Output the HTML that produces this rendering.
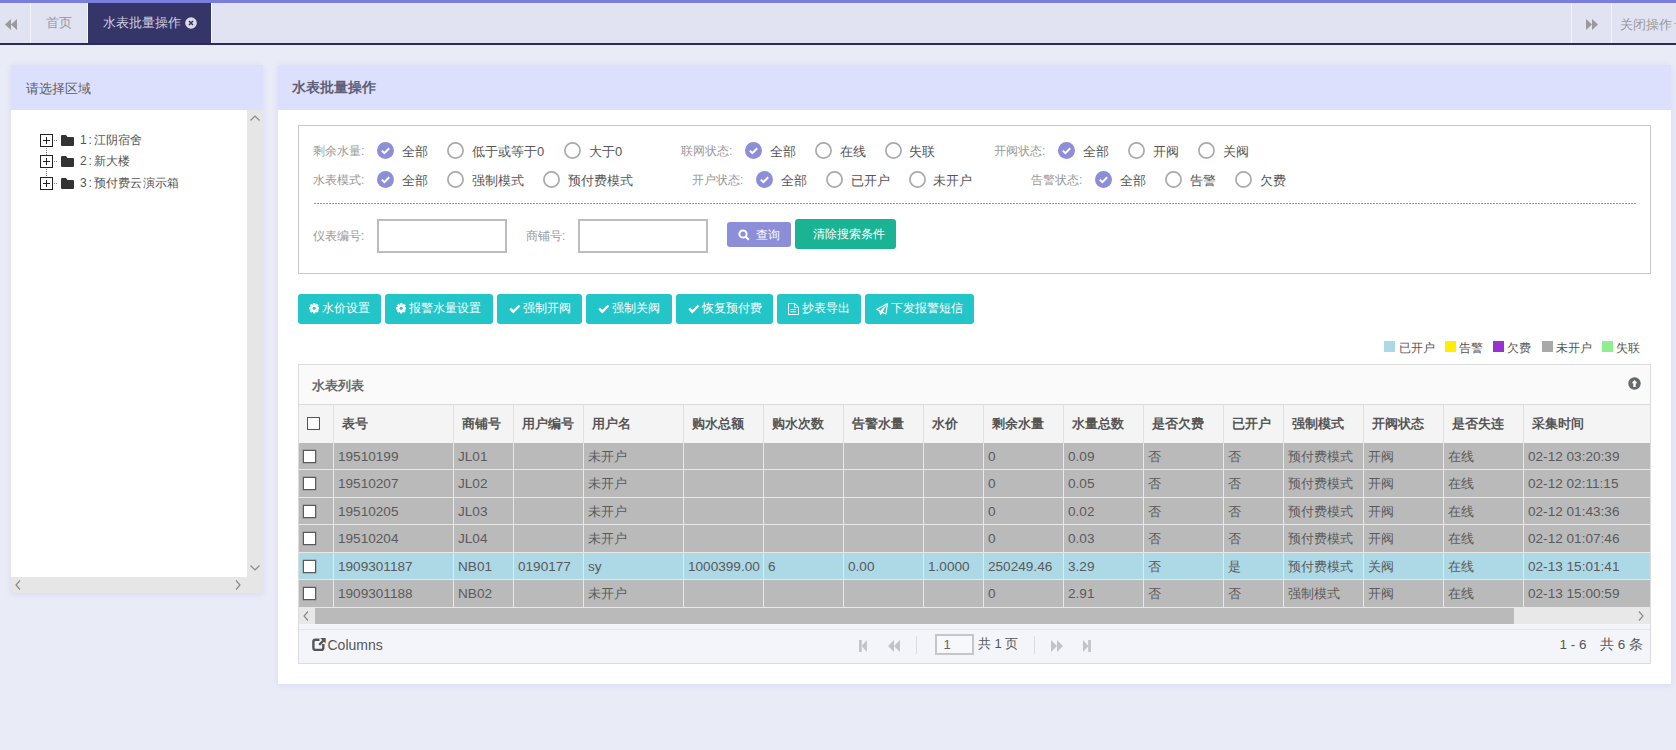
<!DOCTYPE html>
<html><head><meta charset="utf-8">
<style>
*{box-sizing:border-box;margin:0;padding:0}
html,body{width:1676px;height:750px;overflow:hidden;background:#e9ebf7;font-family:"Liberation Sans",sans-serif;color:#676a6c;position:relative}
.a{position:absolute;white-space:nowrap}
svg.a{display:block}
</style></head><body>
<div class="a" style="left:0px;top:0px;width:1676px;height:3px;background:#7a7edb;"></div>
<div class="a" style="left:0px;top:3px;width:1676px;height:40px;background:#e1e3f3;"></div>
<div class="a" style="left:0px;top:43px;width:1676px;height:2px;background:#2a2a5c;"></div>
<div class="a" style="left:30px;top:3px;width:1px;height:40px;background:#f4f4f4;"></div>
<div class="a" style="left:87px;top:3px;width:1px;height:40px;background:#fafafa;"></div>
<div class="a" style="left:88px;top:3px;width:123px;height:40px;background:#35356a;"></div>
<div class="a" style="left:211px;top:3px;width:1px;height:40px;background:#fafafa;"></div>
<div class="a" style="left:1571px;top:3px;width:1px;height:40px;background:#f4f4f6;"></div>
<div class="a" style="left:1611px;top:3px;width:1px;height:40px;background:#f4f4f6;"></div>
<svg class="a" style="left:5px;top:18px" width="13" height="13" viewBox="0 0 13 13"><path d="M6 1 L0 6.5 L6 12Z M12 1 L6 6.5 L12 12Z" fill="#9a9a9a"/></svg>
<div class="a" style="left:46px;top:13.0px;height:20px;line-height:20px;font-size:13px;color:#999;font-weight:normal;">首页</div>
<div class="a" style="left:103px;top:13.0px;height:20px;line-height:20px;font-size:13px;color:#cfd0e0;font-weight:normal;">水表批量操作</div>
<svg class="a" style="left:184.6px;top:17.3px" width="12" height="12" viewBox="0 0 12 12"><circle cx="6" cy="6" r="5.8" fill="#dcdce4"/><path d="M4 4 L8 8 M8 4 L4 8" stroke="#35356a" stroke-width="1.6"/></svg>
<svg class="a" style="left:1585px;top:18px" width="13" height="13" viewBox="0 0 13 13"><path d="M1 1 L7 6.5 L1 12Z M7 1 L13 6.5 L7 12Z" fill="#9a9a9a"/></svg>
<div class="a" style="left:1620px;top:14.5px;height:20px;line-height:20px;font-size:13px;color:#999;font-weight:normal;">关闭操作</div>
<div class="a" style="left:1674px;top:23px;width:2px;height:1px;background:#bbb;"></div>
<div class="a" style="left:11px;top:65px;width:252px;height:528px;background:#fff;box-shadow:0 1px 6px rgba(110,110,225,.13)"></div>
<div class="a" style="left:11px;top:65px;width:252px;height:45px;background:#dde0fc;"></div>
<div class="a" style="left:26px;top:78.7px;height:20px;line-height:20px;font-size:13px;color:#5a5c60;font-weight:normal;">请选择区域</div>
<div class="a" style="left:247px;top:110px;width:16px;height:483px;background:#e6e6e6;"></div>
<div class="a" style="left:11px;top:577px;width:252px;height:16px;background:#e6e6e6;"></div>
<svg class="a" style="left:249px;top:114px" width="12" height="8" viewBox="0 0 12 8"><path d="M1.5 6.5 L6 2 L10.5 6.5" stroke="#8a8a8a" stroke-width="1.2" fill="none"/></svg>
<svg class="a" style="left:249px;top:564px" width="12" height="8" viewBox="0 0 12 8"><path d="M1.5 1.5 L6 6 L10.5 1.5" stroke="#8a8a8a" stroke-width="1.2" fill="none"/></svg>
<svg class="a" style="left:14px;top:579px" width="8" height="12" viewBox="0 0 8 12"><path d="M6 1.5 L2 6 L6 10.5" stroke="#8a8a8a" stroke-width="1.2" fill="none"/></svg>
<svg class="a" style="left:234px;top:579px" width="8" height="12" viewBox="0 0 8 12"><path d="M2 1.5 L6 6 L2 10.5" stroke="#8a8a8a" stroke-width="1.2" fill="none"/></svg>
<svg class="a" style="left:40px;top:134px" width="20" height="13" viewBox="0 0 20 13"><rect x="0.5" y="0.5" width="12" height="12" fill="#fff" stroke="#222"/><path d="M3 6.5 H10 M6.5 3 V10" stroke="#222" stroke-width="1"/><path d="M14 6.5 H15 M16 6.5 H17" stroke="#777"/></svg>
<svg class="a" style="left:61px;top:135px" width="13" height="11" viewBox="0 0 13 11"><path d="M1 0 H5 L6.5 2 H12 Q13 2 13 3 V10 Q13 11 12 11 H1 Q0 11 0 10 V1 Q0 0 1 0Z" fill="#333"/></svg>
<div class="a" style="left:80px;top:130.2px;height:20px;line-height:20px;font-size:12px;color:#555;font-weight:normal;letter-spacing:0.25px">1<span style="padding:0 1.5px">:</span>江阴宿舍</div>
<svg class="a" style="left:46px;top:147px" width="1" height="9" viewBox="0 0 1 9"><path d="M0.5 1 V2 M0.5 3 V4 M0.5 5 V6 M0.5 7 V8" stroke="#777"/></svg>
<svg class="a" style="left:40px;top:155px" width="20" height="13" viewBox="0 0 20 13"><rect x="0.5" y="0.5" width="12" height="12" fill="#fff" stroke="#222"/><path d="M3 6.5 H10 M6.5 3 V10" stroke="#222" stroke-width="1"/><path d="M14 6.5 H15 M16 6.5 H17" stroke="#777"/></svg>
<svg class="a" style="left:61px;top:156px" width="13" height="11" viewBox="0 0 13 11"><path d="M1 0 H5 L6.5 2 H12 Q13 2 13 3 V10 Q13 11 12 11 H1 Q0 11 0 10 V1 Q0 0 1 0Z" fill="#333"/></svg>
<div class="a" style="left:80px;top:151.2px;height:20px;line-height:20px;font-size:12px;color:#555;font-weight:normal;letter-spacing:0.25px">2<span style="padding:0 1.5px">:</span>新大楼</div>
<svg class="a" style="left:46px;top:168px" width="1" height="9" viewBox="0 0 1 9"><path d="M0.5 1 V2 M0.5 3 V4 M0.5 5 V6 M0.5 7 V8" stroke="#777"/></svg>
<svg class="a" style="left:40px;top:177px" width="20" height="13" viewBox="0 0 20 13"><rect x="0.5" y="0.5" width="12" height="12" fill="#fff" stroke="#222"/><path d="M3 6.5 H10 M6.5 3 V10" stroke="#222" stroke-width="1"/><path d="M14 6.5 H15 M16 6.5 H17" stroke="#777"/></svg>
<svg class="a" style="left:61px;top:178px" width="13" height="11" viewBox="0 0 13 11"><path d="M1 0 H5 L6.5 2 H12 Q13 2 13 3 V10 Q13 11 12 11 H1 Q0 11 0 10 V1 Q0 0 1 0Z" fill="#333"/></svg>
<div class="a" style="left:80px;top:173.2px;height:20px;line-height:20px;font-size:12px;color:#555;font-weight:normal;letter-spacing:0.25px">3<span style="padding:0 1.5px">:</span>预付费云演示箱</div>
<div class="a" style="left:278px;top:65px;width:1393px;height:619px;background:#fff;box-shadow:0 1px 6px rgba(110,110,225,.13)"></div>
<div class="a" style="left:278px;top:65px;width:1393px;height:45px;background:#dde0fc;"></div>
<div class="a" style="left:292px;top:77.0px;height:20px;line-height:20px;font-size:14px;color:#5e6078;font-weight:bold;">水表批量操作</div>
<div class="a" style="left:298px;top:125px;width:1353px;height:149px;background:#fff;border:1px solid #c8c8c8"></div>
<svg class="a" style="left:314px;top:202px" width="1322" height="2"><line x1="0" y1="1.5" x2="1322" y2="1.5" stroke="#999" stroke-width="1" stroke-dasharray="2 1"/></svg>
<div class="a" style="left:313px;top:140.5px;height:20px;line-height:20px;font-size:12px;color:#999;font-weight:normal;">剩余水量:</div>
<svg class="a" style="left:377px;top:142.0px" width="17" height="17" viewBox="0 0 17 17"><circle cx="8.5" cy="8.5" r="8.5" fill="#8c8ed8"/><path d="M4.8 8.6 L7.4 11.1 L12.2 6.2" stroke="#fff" stroke-width="2" fill="none"/></svg>
<div class="a" style="left:402px;top:142.0px;height:20px;line-height:20px;font-size:13px;color:#555;font-weight:normal;">全部</div>
<svg class="a" style="left:447px;top:142.0px" width="17" height="17" viewBox="0 0 17 17"><circle cx="8.5" cy="8.5" r="7.6" fill="#fff" stroke="#aaa" stroke-width="1.7"/></svg>
<div class="a" style="left:472px;top:142.0px;height:20px;line-height:20px;font-size:13px;color:#555;font-weight:normal;">低于或等于0</div>
<svg class="a" style="left:564px;top:142.0px" width="17" height="17" viewBox="0 0 17 17"><circle cx="8.5" cy="8.5" r="7.6" fill="#fff" stroke="#aaa" stroke-width="1.7"/></svg>
<div class="a" style="left:589px;top:142.0px;height:20px;line-height:20px;font-size:13px;color:#555;font-weight:normal;">大于0</div>
<div class="a" style="left:681px;top:140.5px;height:20px;line-height:20px;font-size:12px;color:#999;font-weight:normal;">联网状态:</div>
<svg class="a" style="left:745px;top:142.0px" width="17" height="17" viewBox="0 0 17 17"><circle cx="8.5" cy="8.5" r="8.5" fill="#8c8ed8"/><path d="M4.8 8.6 L7.4 11.1 L12.2 6.2" stroke="#fff" stroke-width="2" fill="none"/></svg>
<div class="a" style="left:770px;top:142.0px;height:20px;line-height:20px;font-size:13px;color:#555;font-weight:normal;">全部</div>
<svg class="a" style="left:815px;top:142.0px" width="17" height="17" viewBox="0 0 17 17"><circle cx="8.5" cy="8.5" r="7.6" fill="#fff" stroke="#aaa" stroke-width="1.7"/></svg>
<div class="a" style="left:840px;top:142.0px;height:20px;line-height:20px;font-size:13px;color:#555;font-weight:normal;">在线</div>
<svg class="a" style="left:885px;top:142.0px" width="17" height="17" viewBox="0 0 17 17"><circle cx="8.5" cy="8.5" r="7.6" fill="#fff" stroke="#aaa" stroke-width="1.7"/></svg>
<div class="a" style="left:909px;top:142.0px;height:20px;line-height:20px;font-size:13px;color:#555;font-weight:normal;">失联</div>
<div class="a" style="left:994px;top:140.5px;height:20px;line-height:20px;font-size:12px;color:#999;font-weight:normal;">开阀状态:</div>
<svg class="a" style="left:1058px;top:142.0px" width="17" height="17" viewBox="0 0 17 17"><circle cx="8.5" cy="8.5" r="8.5" fill="#8c8ed8"/><path d="M4.8 8.6 L7.4 11.1 L12.2 6.2" stroke="#fff" stroke-width="2" fill="none"/></svg>
<div class="a" style="left:1083px;top:142.0px;height:20px;line-height:20px;font-size:13px;color:#555;font-weight:normal;">全部</div>
<svg class="a" style="left:1128px;top:142.0px" width="17" height="17" viewBox="0 0 17 17"><circle cx="8.5" cy="8.5" r="7.6" fill="#fff" stroke="#aaa" stroke-width="1.7"/></svg>
<div class="a" style="left:1153px;top:142.0px;height:20px;line-height:20px;font-size:13px;color:#555;font-weight:normal;">开阀</div>
<svg class="a" style="left:1198px;top:142.0px" width="17" height="17" viewBox="0 0 17 17"><circle cx="8.5" cy="8.5" r="7.6" fill="#fff" stroke="#aaa" stroke-width="1.7"/></svg>
<div class="a" style="left:1223px;top:142.0px;height:20px;line-height:20px;font-size:13px;color:#555;font-weight:normal;">关阀</div>
<div class="a" style="left:313px;top:169.5px;height:20px;line-height:20px;font-size:12px;color:#999;font-weight:normal;">水表模式:</div>
<svg class="a" style="left:377px;top:171.0px" width="17" height="17" viewBox="0 0 17 17"><circle cx="8.5" cy="8.5" r="8.5" fill="#8c8ed8"/><path d="M4.8 8.6 L7.4 11.1 L12.2 6.2" stroke="#fff" stroke-width="2" fill="none"/></svg>
<div class="a" style="left:402px;top:171.0px;height:20px;line-height:20px;font-size:13px;color:#555;font-weight:normal;">全部</div>
<svg class="a" style="left:447px;top:171.0px" width="17" height="17" viewBox="0 0 17 17"><circle cx="8.5" cy="8.5" r="7.6" fill="#fff" stroke="#aaa" stroke-width="1.7"/></svg>
<div class="a" style="left:472px;top:171.0px;height:20px;line-height:20px;font-size:13px;color:#555;font-weight:normal;">强制模式</div>
<svg class="a" style="left:543px;top:171.0px" width="17" height="17" viewBox="0 0 17 17"><circle cx="8.5" cy="8.5" r="7.6" fill="#fff" stroke="#aaa" stroke-width="1.7"/></svg>
<div class="a" style="left:568px;top:171.0px;height:20px;line-height:20px;font-size:13px;color:#555;font-weight:normal;">预付费模式</div>
<div class="a" style="left:692px;top:169.5px;height:20px;line-height:20px;font-size:12px;color:#999;font-weight:normal;">开户状态:</div>
<svg class="a" style="left:756px;top:171.0px" width="17" height="17" viewBox="0 0 17 17"><circle cx="8.5" cy="8.5" r="8.5" fill="#8c8ed8"/><path d="M4.8 8.6 L7.4 11.1 L12.2 6.2" stroke="#fff" stroke-width="2" fill="none"/></svg>
<div class="a" style="left:781px;top:171.0px;height:20px;line-height:20px;font-size:13px;color:#555;font-weight:normal;">全部</div>
<svg class="a" style="left:826px;top:171.0px" width="17" height="17" viewBox="0 0 17 17"><circle cx="8.5" cy="8.5" r="7.6" fill="#fff" stroke="#aaa" stroke-width="1.7"/></svg>
<div class="a" style="left:851px;top:171.0px;height:20px;line-height:20px;font-size:13px;color:#555;font-weight:normal;">已开户</div>
<svg class="a" style="left:909px;top:171.0px" width="17" height="17" viewBox="0 0 17 17"><circle cx="8.5" cy="8.5" r="7.6" fill="#fff" stroke="#aaa" stroke-width="1.7"/></svg>
<div class="a" style="left:933px;top:171.0px;height:20px;line-height:20px;font-size:13px;color:#555;font-weight:normal;">未开户</div>
<div class="a" style="left:1031px;top:169.5px;height:20px;line-height:20px;font-size:12px;color:#999;font-weight:normal;">告警状态:</div>
<svg class="a" style="left:1095px;top:171.0px" width="17" height="17" viewBox="0 0 17 17"><circle cx="8.5" cy="8.5" r="8.5" fill="#8c8ed8"/><path d="M4.8 8.6 L7.4 11.1 L12.2 6.2" stroke="#fff" stroke-width="2" fill="none"/></svg>
<div class="a" style="left:1120px;top:171.0px;height:20px;line-height:20px;font-size:13px;color:#555;font-weight:normal;">全部</div>
<svg class="a" style="left:1165px;top:171.0px" width="17" height="17" viewBox="0 0 17 17"><circle cx="8.5" cy="8.5" r="7.6" fill="#fff" stroke="#aaa" stroke-width="1.7"/></svg>
<div class="a" style="left:1190px;top:171.0px;height:20px;line-height:20px;font-size:13px;color:#555;font-weight:normal;">告警</div>
<svg class="a" style="left:1235px;top:171.0px" width="17" height="17" viewBox="0 0 17 17"><circle cx="8.5" cy="8.5" r="7.6" fill="#fff" stroke="#aaa" stroke-width="1.7"/></svg>
<div class="a" style="left:1260px;top:171.0px;height:20px;line-height:20px;font-size:13px;color:#555;font-weight:normal;">欠费</div>
<div class="a" style="left:313px;top:226.0px;height:20px;line-height:20px;font-size:12px;color:#999;font-weight:normal;">仪表编号:</div>
<div class="a" style="left:377px;top:219px;width:130px;height:34px;background:#fff;border:2px solid #bdbdbd"></div>
<div class="a" style="left:526px;top:226.0px;height:20px;line-height:20px;font-size:12px;color:#999;font-weight:normal;">商铺号:</div>
<div class="a" style="left:578px;top:219px;width:130px;height:34px;background:#fff;border:2px solid #bdbdbd"></div>
<div class="a" style="left:727px;top:222px;width:64px;height:25px;background:#8c8ed8;border-radius:3px"></div>
<svg class="a" style="left:738px;top:229px" width="12" height="12" viewBox="0 0 12 12"><circle cx="5" cy="5" r="3.6" stroke="#fff" stroke-width="2" fill="none"/><path d="M7.6 7.6 L10.8 10.8" stroke="#fff" stroke-width="2.2"/></svg>
<div class="a" style="left:756px;top:225.0px;height:20px;line-height:20px;font-size:12px;color:#fff;font-weight:normal;">查询</div>
<div class="a" style="left:795px;top:219px;width:101px;height:30px;background:#1ab394;border-radius:3px"></div>
<div class="a" style="left:813px;top:224.0px;height:20px;line-height:20px;font-size:12px;color:#fff;font-weight:normal;">清除搜索条件</div>
<div class="a" style="left:298px;top:294px;width:83px;height:30px;background:#23c6c8;border-radius:3px"></div>
<svg class="a" style="left:308.5px;top:303.4px" width="10.4" height="10.4" viewBox="0 0 10.4 10.4"><circle cx="5.2" cy="5.2" r="3.7" fill="#fff"/><rect x="3.95" y="0.0" width="2.5" height="3" fill="#fff" transform="rotate(0 5.2 5.2)"/><rect x="3.95" y="0.0" width="2.5" height="3" fill="#fff" transform="rotate(45 5.2 5.2)"/><rect x="3.95" y="0.0" width="2.5" height="3" fill="#fff" transform="rotate(90 5.2 5.2)"/><rect x="3.95" y="0.0" width="2.5" height="3" fill="#fff" transform="rotate(135 5.2 5.2)"/><rect x="3.95" y="0.0" width="2.5" height="3" fill="#fff" transform="rotate(180 5.2 5.2)"/><rect x="3.95" y="0.0" width="2.5" height="3" fill="#fff" transform="rotate(225 5.2 5.2)"/><rect x="3.95" y="0.0" width="2.5" height="3" fill="#fff" transform="rotate(270 5.2 5.2)"/><rect x="3.95" y="0.0" width="2.5" height="3" fill="#fff" transform="rotate(315 5.2 5.2)"/><circle cx="5.2" cy="5.2" r="1.55" fill="#23c6c8"/></svg>
<div class="a" style="left:322px;top:298.2px;height:20px;line-height:20px;font-size:12px;color:#fff;font-weight:normal;">水价设置</div>
<div class="a" style="left:385px;top:294px;width:108px;height:30px;background:#23c6c8;border-radius:3px"></div>
<svg class="a" style="left:395.5px;top:303.4px" width="10.4" height="10.4" viewBox="0 0 10.4 10.4"><circle cx="5.2" cy="5.2" r="3.7" fill="#fff"/><rect x="3.95" y="0.0" width="2.5" height="3" fill="#fff" transform="rotate(0 5.2 5.2)"/><rect x="3.95" y="0.0" width="2.5" height="3" fill="#fff" transform="rotate(45 5.2 5.2)"/><rect x="3.95" y="0.0" width="2.5" height="3" fill="#fff" transform="rotate(90 5.2 5.2)"/><rect x="3.95" y="0.0" width="2.5" height="3" fill="#fff" transform="rotate(135 5.2 5.2)"/><rect x="3.95" y="0.0" width="2.5" height="3" fill="#fff" transform="rotate(180 5.2 5.2)"/><rect x="3.95" y="0.0" width="2.5" height="3" fill="#fff" transform="rotate(225 5.2 5.2)"/><rect x="3.95" y="0.0" width="2.5" height="3" fill="#fff" transform="rotate(270 5.2 5.2)"/><rect x="3.95" y="0.0" width="2.5" height="3" fill="#fff" transform="rotate(315 5.2 5.2)"/><circle cx="5.2" cy="5.2" r="1.55" fill="#23c6c8"/></svg>
<div class="a" style="left:409px;top:298.2px;height:20px;line-height:20px;font-size:12px;color:#fff;font-weight:normal;">报警水量设置</div>
<div class="a" style="left:497px;top:294px;width:85px;height:30px;background:#23c6c8;border-radius:3px"></div>
<svg class="a" style="left:508.5px;top:304px" width="12" height="10" viewBox="0 0 12 10"><path d="M1.2 4.6 L4.3 7.7 L10.5 1.5" stroke="#fff" stroke-width="2.4" fill="none"/></svg>
<div class="a" style="left:523.2px;top:298.2px;height:20px;line-height:20px;font-size:12px;color:#fff;font-weight:normal;">强制开阀</div>
<div class="a" style="left:586px;top:294px;width:86px;height:30px;background:#23c6c8;border-radius:3px"></div>
<svg class="a" style="left:597.5px;top:304px" width="12" height="10" viewBox="0 0 12 10"><path d="M1.2 4.6 L4.3 7.7 L10.5 1.5" stroke="#fff" stroke-width="2.4" fill="none"/></svg>
<div class="a" style="left:612.2px;top:298.2px;height:20px;line-height:20px;font-size:12px;color:#fff;font-weight:normal;">强制关阀</div>
<div class="a" style="left:676px;top:294px;width:97px;height:30px;background:#23c6c8;border-radius:3px"></div>
<svg class="a" style="left:687.5px;top:304px" width="12" height="10" viewBox="0 0 12 10"><path d="M1.2 4.6 L4.3 7.7 L10.5 1.5" stroke="#fff" stroke-width="2.4" fill="none"/></svg>
<div class="a" style="left:702.2px;top:298.2px;height:20px;line-height:20px;font-size:12px;color:#fff;font-weight:normal;">恢复预付费</div>
<div class="a" style="left:777px;top:294px;width:84px;height:30px;background:#23c6c8;border-radius:3px"></div>
<svg class="a" style="left:788px;top:303px" width="11" height="12" viewBox="0 0 11 12"><path d="M0.5 0.5 H6.8 L10.5 4.2 V11.5 H0.5Z" stroke="#fff" stroke-width="1" fill="none"/><path d="M6.5 0.5 V4.5 H10.5" stroke="#fff" stroke-width="0.8" fill="none"/><path d="M2.5 6.5 H8 M2.5 8.7 H8" stroke="#fff" stroke-width="1.1"/></svg>
<div class="a" style="left:801.6px;top:298.2px;height:20px;line-height:20px;font-size:12px;color:#fff;font-weight:normal;">抄表导出</div>
<div class="a" style="left:865px;top:294px;width:109px;height:30px;background:#23c6c8;border-radius:3px"></div>
<svg class="a" style="left:876px;top:303px" width="12" height="12" viewBox="0 0 12 12"><path d="M11.5 0.6 L0.7 6.5 L3.6 7.7 L4.6 11.5 L6.4 9.2 L9.9 11 Z" stroke="#fff" stroke-width="1.1" fill="none" stroke-linejoin="round"/><path d="M11.5 0.6 L4 8 L4.6 11.5 L6.4 9.2Z" fill="#fff"/></svg>
<div class="a" style="left:891.4px;top:298.2px;height:20px;line-height:20px;font-size:12px;color:#fff;font-weight:normal;">下发报警短信</div>
<div class="a" style="left:1384px;top:341px;width:11px;height:11px;background:#add8e6;"></div>
<div class="a" style="left:1399px;top:337.8px;height:20px;line-height:20px;font-size:12px;color:#555;font-weight:normal;">已开户</div>
<div class="a" style="left:1445px;top:341px;width:11px;height:11px;background:#ffee00;"></div>
<div class="a" style="left:1459px;top:337.8px;height:20px;line-height:20px;font-size:12px;color:#555;font-weight:normal;">告警</div>
<div class="a" style="left:1493px;top:341px;width:11px;height:11px;background:#9932cc;"></div>
<div class="a" style="left:1507px;top:337.8px;height:20px;line-height:20px;font-size:12px;color:#555;font-weight:normal;">欠费</div>
<div class="a" style="left:1542px;top:341px;width:11px;height:11px;background:#a9a9a9;"></div>
<div class="a" style="left:1556px;top:337.8px;height:20px;line-height:20px;font-size:12px;color:#555;font-weight:normal;">未开户</div>
<div class="a" style="left:1602px;top:341px;width:11px;height:11px;background:#90ee90;"></div>
<div class="a" style="left:1616px;top:337.8px;height:20px;line-height:20px;font-size:12px;color:#555;font-weight:normal;">失联</div>
<div class="a" style="left:298px;top:364px;width:1353px;height:300px;background:#fafafa;border:1px solid #dcdcdc"></div>
<div class="a" style="left:312px;top:376.0px;height:20px;line-height:20px;font-size:13px;color:#676a6c;font-weight:bold;">水表列表</div>
<svg class="a" style="left:1627.5px;top:377px" width="13" height="13" viewBox="0 0 13 13"><circle cx="6.5" cy="6.5" r="6.2" fill="#676a6c"/><path d="M6.5 3 L3.6 6.2 H5.3 V10 H7.7 V6.2 H9.4Z" fill="#fff"/></svg>
<div class="a" style="left:299px;top:404px;width:1351px;height:39px;background:#f4f4f4;border-top:1px solid #dcdcdc"></div>
<div class="a" style="left:333px;top:405px;width:1px;height:38px;background:#e0e0e0;"></div>
<div class="a" style="left:453px;top:405px;width:1px;height:38px;background:#e0e0e0;"></div>
<div class="a" style="left:513px;top:405px;width:1px;height:38px;background:#e0e0e0;"></div>
<div class="a" style="left:583px;top:405px;width:1px;height:38px;background:#e0e0e0;"></div>
<div class="a" style="left:683px;top:405px;width:1px;height:38px;background:#e0e0e0;"></div>
<div class="a" style="left:763px;top:405px;width:1px;height:38px;background:#e0e0e0;"></div>
<div class="a" style="left:843px;top:405px;width:1px;height:38px;background:#e0e0e0;"></div>
<div class="a" style="left:923px;top:405px;width:1px;height:38px;background:#e0e0e0;"></div>
<div class="a" style="left:983px;top:405px;width:1px;height:38px;background:#e0e0e0;"></div>
<div class="a" style="left:1063px;top:405px;width:1px;height:38px;background:#e0e0e0;"></div>
<div class="a" style="left:1143px;top:405px;width:1px;height:38px;background:#e0e0e0;"></div>
<div class="a" style="left:1223px;top:405px;width:1px;height:38px;background:#e0e0e0;"></div>
<div class="a" style="left:1283px;top:405px;width:1px;height:38px;background:#e0e0e0;"></div>
<div class="a" style="left:1363px;top:405px;width:1px;height:38px;background:#e0e0e0;"></div>
<div class="a" style="left:1443px;top:405px;width:1px;height:38px;background:#e0e0e0;"></div>
<div class="a" style="left:1523px;top:405px;width:1px;height:38px;background:#e0e0e0;"></div>
<div class="a" style="left:307px;top:417px;width:13px;height:13px;border:1px solid #555;background:#fff"></div>
<div class="a" style="left:342px;top:414.0px;height:20px;line-height:20px;font-size:13px;color:#555;font-weight:bold;">表号</div>
<div class="a" style="left:462px;top:414.0px;height:20px;line-height:20px;font-size:13px;color:#555;font-weight:bold;">商铺号</div>
<div class="a" style="left:522px;top:414.0px;height:20px;line-height:20px;font-size:13px;color:#555;font-weight:bold;">用户编号</div>
<div class="a" style="left:592px;top:414.0px;height:20px;line-height:20px;font-size:13px;color:#555;font-weight:bold;">用户名</div>
<div class="a" style="left:692px;top:414.0px;height:20px;line-height:20px;font-size:13px;color:#555;font-weight:bold;">购水总额</div>
<div class="a" style="left:772px;top:414.0px;height:20px;line-height:20px;font-size:13px;color:#555;font-weight:bold;">购水次数</div>
<div class="a" style="left:852px;top:414.0px;height:20px;line-height:20px;font-size:13px;color:#555;font-weight:bold;">告警水量</div>
<div class="a" style="left:932px;top:414.0px;height:20px;line-height:20px;font-size:13px;color:#555;font-weight:bold;">水价</div>
<div class="a" style="left:992px;top:414.0px;height:20px;line-height:20px;font-size:13px;color:#555;font-weight:bold;">剩余水量</div>
<div class="a" style="left:1072px;top:414.0px;height:20px;line-height:20px;font-size:13px;color:#555;font-weight:bold;">水量总数</div>
<div class="a" style="left:1152px;top:414.0px;height:20px;line-height:20px;font-size:13px;color:#555;font-weight:bold;">是否欠费</div>
<div class="a" style="left:1232px;top:414.0px;height:20px;line-height:20px;font-size:13px;color:#555;font-weight:bold;">已开户</div>
<div class="a" style="left:1292px;top:414.0px;height:20px;line-height:20px;font-size:13px;color:#555;font-weight:bold;">强制模式</div>
<div class="a" style="left:1372px;top:414.0px;height:20px;line-height:20px;font-size:13px;color:#555;font-weight:bold;">开阀状态</div>
<div class="a" style="left:1452px;top:414.0px;height:20px;line-height:20px;font-size:13px;color:#555;font-weight:bold;">是否失连</div>
<div class="a" style="left:1532px;top:414.0px;height:20px;line-height:20px;font-size:13px;color:#555;font-weight:bold;">采集时间</div>
<div class="a" style="left:299px;top:443px;width:1351px;height:26px;background:#bababa;"></div>
<div class="a" style="left:299px;top:469px;width:1351px;height:1px;background:#e8e8e8;"></div>
<div class="a" style="left:333px;top:443px;width:1px;height:27px;background:#e8e8e8;"></div>
<div class="a" style="left:453px;top:443px;width:1px;height:27px;background:#e8e8e8;"></div>
<div class="a" style="left:513px;top:443px;width:1px;height:27px;background:#e8e8e8;"></div>
<div class="a" style="left:583px;top:443px;width:1px;height:27px;background:#e8e8e8;"></div>
<div class="a" style="left:683px;top:443px;width:1px;height:27px;background:#e8e8e8;"></div>
<div class="a" style="left:763px;top:443px;width:1px;height:27px;background:#e8e8e8;"></div>
<div class="a" style="left:843px;top:443px;width:1px;height:27px;background:#e8e8e8;"></div>
<div class="a" style="left:923px;top:443px;width:1px;height:27px;background:#e8e8e8;"></div>
<div class="a" style="left:983px;top:443px;width:1px;height:27px;background:#e8e8e8;"></div>
<div class="a" style="left:1063px;top:443px;width:1px;height:27px;background:#e8e8e8;"></div>
<div class="a" style="left:1143px;top:443px;width:1px;height:27px;background:#e8e8e8;"></div>
<div class="a" style="left:1223px;top:443px;width:1px;height:27px;background:#e8e8e8;"></div>
<div class="a" style="left:1283px;top:443px;width:1px;height:27px;background:#e8e8e8;"></div>
<div class="a" style="left:1363px;top:443px;width:1px;height:27px;background:#e8e8e8;"></div>
<div class="a" style="left:1443px;top:443px;width:1px;height:27px;background:#e8e8e8;"></div>
<div class="a" style="left:1523px;top:443px;width:1px;height:27px;background:#e8e8e8;"></div>
<div class="a" style="left:303px;top:449.5px;width:13px;height:13px;border:1px solid #5a5a5a;box-shadow:0 0 0 0.4px rgba(90,90,90,.6);background:#fff"></div>
<div class="a" style="left:338px;top:446.9px;height:20px;line-height:20px;font-size:13.6px;color:#5a5a5a;font-weight:normal;">19510199</div>
<div class="a" style="left:458px;top:446.9px;height:20px;line-height:20px;font-size:13.6px;color:#5a5a5a;font-weight:normal;">JL01</div>
<div class="a" style="left:588px;top:446.5px;height:20px;line-height:20px;font-size:13px;color:#5a5a5a;font-weight:normal;">未开户</div>
<div class="a" style="left:988px;top:446.9px;height:20px;line-height:20px;font-size:13.6px;color:#5a5a5a;font-weight:normal;">0</div>
<div class="a" style="left:1068px;top:446.9px;height:20px;line-height:20px;font-size:13.6px;color:#5a5a5a;font-weight:normal;">0.09</div>
<div class="a" style="left:1148px;top:446.5px;height:20px;line-height:20px;font-size:13px;color:#5a5a5a;font-weight:normal;">否</div>
<div class="a" style="left:1228px;top:446.5px;height:20px;line-height:20px;font-size:13px;color:#5a5a5a;font-weight:normal;">否</div>
<div class="a" style="left:1288px;top:446.5px;height:20px;line-height:20px;font-size:13px;color:#5a5a5a;font-weight:normal;">预付费模式</div>
<div class="a" style="left:1368px;top:446.5px;height:20px;line-height:20px;font-size:13px;color:#5a5a5a;font-weight:normal;">开阀</div>
<div class="a" style="left:1448px;top:446.5px;height:20px;line-height:20px;font-size:13px;color:#5a5a5a;font-weight:normal;">在线</div>
<div class="a" style="left:1528px;top:446.9px;height:20px;line-height:20px;font-size:13.6px;color:#5a5a5a;font-weight:normal;">02-12 03:20:39</div>
<div class="a" style="left:299px;top:470px;width:1351px;height:27px;background:#bababa;"></div>
<div class="a" style="left:299px;top:497px;width:1351px;height:1px;background:#e8e8e8;"></div>
<div class="a" style="left:333px;top:470px;width:1px;height:28px;background:#e8e8e8;"></div>
<div class="a" style="left:453px;top:470px;width:1px;height:28px;background:#e8e8e8;"></div>
<div class="a" style="left:513px;top:470px;width:1px;height:28px;background:#e8e8e8;"></div>
<div class="a" style="left:583px;top:470px;width:1px;height:28px;background:#e8e8e8;"></div>
<div class="a" style="left:683px;top:470px;width:1px;height:28px;background:#e8e8e8;"></div>
<div class="a" style="left:763px;top:470px;width:1px;height:28px;background:#e8e8e8;"></div>
<div class="a" style="left:843px;top:470px;width:1px;height:28px;background:#e8e8e8;"></div>
<div class="a" style="left:923px;top:470px;width:1px;height:28px;background:#e8e8e8;"></div>
<div class="a" style="left:983px;top:470px;width:1px;height:28px;background:#e8e8e8;"></div>
<div class="a" style="left:1063px;top:470px;width:1px;height:28px;background:#e8e8e8;"></div>
<div class="a" style="left:1143px;top:470px;width:1px;height:28px;background:#e8e8e8;"></div>
<div class="a" style="left:1223px;top:470px;width:1px;height:28px;background:#e8e8e8;"></div>
<div class="a" style="left:1283px;top:470px;width:1px;height:28px;background:#e8e8e8;"></div>
<div class="a" style="left:1363px;top:470px;width:1px;height:28px;background:#e8e8e8;"></div>
<div class="a" style="left:1443px;top:470px;width:1px;height:28px;background:#e8e8e8;"></div>
<div class="a" style="left:1523px;top:470px;width:1px;height:28px;background:#e8e8e8;"></div>
<div class="a" style="left:303px;top:477.0px;width:13px;height:13px;border:1px solid #5a5a5a;box-shadow:0 0 0 0.4px rgba(90,90,90,.6);background:#fff"></div>
<div class="a" style="left:338px;top:474.4px;height:20px;line-height:20px;font-size:13.6px;color:#5a5a5a;font-weight:normal;">19510207</div>
<div class="a" style="left:458px;top:474.4px;height:20px;line-height:20px;font-size:13.6px;color:#5a5a5a;font-weight:normal;">JL02</div>
<div class="a" style="left:588px;top:474.0px;height:20px;line-height:20px;font-size:13px;color:#5a5a5a;font-weight:normal;">未开户</div>
<div class="a" style="left:988px;top:474.4px;height:20px;line-height:20px;font-size:13.6px;color:#5a5a5a;font-weight:normal;">0</div>
<div class="a" style="left:1068px;top:474.4px;height:20px;line-height:20px;font-size:13.6px;color:#5a5a5a;font-weight:normal;">0.05</div>
<div class="a" style="left:1148px;top:474.0px;height:20px;line-height:20px;font-size:13px;color:#5a5a5a;font-weight:normal;">否</div>
<div class="a" style="left:1228px;top:474.0px;height:20px;line-height:20px;font-size:13px;color:#5a5a5a;font-weight:normal;">否</div>
<div class="a" style="left:1288px;top:474.0px;height:20px;line-height:20px;font-size:13px;color:#5a5a5a;font-weight:normal;">预付费模式</div>
<div class="a" style="left:1368px;top:474.0px;height:20px;line-height:20px;font-size:13px;color:#5a5a5a;font-weight:normal;">开阀</div>
<div class="a" style="left:1448px;top:474.0px;height:20px;line-height:20px;font-size:13px;color:#5a5a5a;font-weight:normal;">在线</div>
<div class="a" style="left:1528px;top:474.4px;height:20px;line-height:20px;font-size:13.6px;color:#5a5a5a;font-weight:normal;">02-12 02:11:15</div>
<div class="a" style="left:299px;top:498px;width:1351px;height:26px;background:#bababa;"></div>
<div class="a" style="left:299px;top:524px;width:1351px;height:1px;background:#e8e8e8;"></div>
<div class="a" style="left:333px;top:498px;width:1px;height:27px;background:#e8e8e8;"></div>
<div class="a" style="left:453px;top:498px;width:1px;height:27px;background:#e8e8e8;"></div>
<div class="a" style="left:513px;top:498px;width:1px;height:27px;background:#e8e8e8;"></div>
<div class="a" style="left:583px;top:498px;width:1px;height:27px;background:#e8e8e8;"></div>
<div class="a" style="left:683px;top:498px;width:1px;height:27px;background:#e8e8e8;"></div>
<div class="a" style="left:763px;top:498px;width:1px;height:27px;background:#e8e8e8;"></div>
<div class="a" style="left:843px;top:498px;width:1px;height:27px;background:#e8e8e8;"></div>
<div class="a" style="left:923px;top:498px;width:1px;height:27px;background:#e8e8e8;"></div>
<div class="a" style="left:983px;top:498px;width:1px;height:27px;background:#e8e8e8;"></div>
<div class="a" style="left:1063px;top:498px;width:1px;height:27px;background:#e8e8e8;"></div>
<div class="a" style="left:1143px;top:498px;width:1px;height:27px;background:#e8e8e8;"></div>
<div class="a" style="left:1223px;top:498px;width:1px;height:27px;background:#e8e8e8;"></div>
<div class="a" style="left:1283px;top:498px;width:1px;height:27px;background:#e8e8e8;"></div>
<div class="a" style="left:1363px;top:498px;width:1px;height:27px;background:#e8e8e8;"></div>
<div class="a" style="left:1443px;top:498px;width:1px;height:27px;background:#e8e8e8;"></div>
<div class="a" style="left:1523px;top:498px;width:1px;height:27px;background:#e8e8e8;"></div>
<div class="a" style="left:303px;top:504.5px;width:13px;height:13px;border:1px solid #5a5a5a;box-shadow:0 0 0 0.4px rgba(90,90,90,.6);background:#fff"></div>
<div class="a" style="left:338px;top:501.9px;height:20px;line-height:20px;font-size:13.6px;color:#5a5a5a;font-weight:normal;">19510205</div>
<div class="a" style="left:458px;top:501.9px;height:20px;line-height:20px;font-size:13.6px;color:#5a5a5a;font-weight:normal;">JL03</div>
<div class="a" style="left:588px;top:501.5px;height:20px;line-height:20px;font-size:13px;color:#5a5a5a;font-weight:normal;">未开户</div>
<div class="a" style="left:988px;top:501.9px;height:20px;line-height:20px;font-size:13.6px;color:#5a5a5a;font-weight:normal;">0</div>
<div class="a" style="left:1068px;top:501.9px;height:20px;line-height:20px;font-size:13.6px;color:#5a5a5a;font-weight:normal;">0.02</div>
<div class="a" style="left:1148px;top:501.5px;height:20px;line-height:20px;font-size:13px;color:#5a5a5a;font-weight:normal;">否</div>
<div class="a" style="left:1228px;top:501.5px;height:20px;line-height:20px;font-size:13px;color:#5a5a5a;font-weight:normal;">否</div>
<div class="a" style="left:1288px;top:501.5px;height:20px;line-height:20px;font-size:13px;color:#5a5a5a;font-weight:normal;">预付费模式</div>
<div class="a" style="left:1368px;top:501.5px;height:20px;line-height:20px;font-size:13px;color:#5a5a5a;font-weight:normal;">开阀</div>
<div class="a" style="left:1448px;top:501.5px;height:20px;line-height:20px;font-size:13px;color:#5a5a5a;font-weight:normal;">在线</div>
<div class="a" style="left:1528px;top:501.9px;height:20px;line-height:20px;font-size:13.6px;color:#5a5a5a;font-weight:normal;">02-12 01:43:36</div>
<div class="a" style="left:299px;top:525px;width:1351px;height:27px;background:#bababa;"></div>
<div class="a" style="left:299px;top:552px;width:1351px;height:1px;background:#e8e8e8;"></div>
<div class="a" style="left:333px;top:525px;width:1px;height:28px;background:#e8e8e8;"></div>
<div class="a" style="left:453px;top:525px;width:1px;height:28px;background:#e8e8e8;"></div>
<div class="a" style="left:513px;top:525px;width:1px;height:28px;background:#e8e8e8;"></div>
<div class="a" style="left:583px;top:525px;width:1px;height:28px;background:#e8e8e8;"></div>
<div class="a" style="left:683px;top:525px;width:1px;height:28px;background:#e8e8e8;"></div>
<div class="a" style="left:763px;top:525px;width:1px;height:28px;background:#e8e8e8;"></div>
<div class="a" style="left:843px;top:525px;width:1px;height:28px;background:#e8e8e8;"></div>
<div class="a" style="left:923px;top:525px;width:1px;height:28px;background:#e8e8e8;"></div>
<div class="a" style="left:983px;top:525px;width:1px;height:28px;background:#e8e8e8;"></div>
<div class="a" style="left:1063px;top:525px;width:1px;height:28px;background:#e8e8e8;"></div>
<div class="a" style="left:1143px;top:525px;width:1px;height:28px;background:#e8e8e8;"></div>
<div class="a" style="left:1223px;top:525px;width:1px;height:28px;background:#e8e8e8;"></div>
<div class="a" style="left:1283px;top:525px;width:1px;height:28px;background:#e8e8e8;"></div>
<div class="a" style="left:1363px;top:525px;width:1px;height:28px;background:#e8e8e8;"></div>
<div class="a" style="left:1443px;top:525px;width:1px;height:28px;background:#e8e8e8;"></div>
<div class="a" style="left:1523px;top:525px;width:1px;height:28px;background:#e8e8e8;"></div>
<div class="a" style="left:303px;top:532.0px;width:13px;height:13px;border:1px solid #5a5a5a;box-shadow:0 0 0 0.4px rgba(90,90,90,.6);background:#fff"></div>
<div class="a" style="left:338px;top:529.4px;height:20px;line-height:20px;font-size:13.6px;color:#5a5a5a;font-weight:normal;">19510204</div>
<div class="a" style="left:458px;top:529.4px;height:20px;line-height:20px;font-size:13.6px;color:#5a5a5a;font-weight:normal;">JL04</div>
<div class="a" style="left:588px;top:529.0px;height:20px;line-height:20px;font-size:13px;color:#5a5a5a;font-weight:normal;">未开户</div>
<div class="a" style="left:988px;top:529.4px;height:20px;line-height:20px;font-size:13.6px;color:#5a5a5a;font-weight:normal;">0</div>
<div class="a" style="left:1068px;top:529.4px;height:20px;line-height:20px;font-size:13.6px;color:#5a5a5a;font-weight:normal;">0.03</div>
<div class="a" style="left:1148px;top:529.0px;height:20px;line-height:20px;font-size:13px;color:#5a5a5a;font-weight:normal;">否</div>
<div class="a" style="left:1228px;top:529.0px;height:20px;line-height:20px;font-size:13px;color:#5a5a5a;font-weight:normal;">否</div>
<div class="a" style="left:1288px;top:529.0px;height:20px;line-height:20px;font-size:13px;color:#5a5a5a;font-weight:normal;">预付费模式</div>
<div class="a" style="left:1368px;top:529.0px;height:20px;line-height:20px;font-size:13px;color:#5a5a5a;font-weight:normal;">开阀</div>
<div class="a" style="left:1448px;top:529.0px;height:20px;line-height:20px;font-size:13px;color:#5a5a5a;font-weight:normal;">在线</div>
<div class="a" style="left:1528px;top:529.4px;height:20px;line-height:20px;font-size:13.6px;color:#5a5a5a;font-weight:normal;">02-12 01:07:46</div>
<div class="a" style="left:299px;top:553px;width:1351px;height:26px;background:#add8e6;"></div>
<div class="a" style="left:299px;top:579px;width:1351px;height:1px;background:#e8e8e8;"></div>
<div class="a" style="left:333px;top:553px;width:1px;height:27px;background:#e8e8e8;"></div>
<div class="a" style="left:453px;top:553px;width:1px;height:27px;background:#e8e8e8;"></div>
<div class="a" style="left:513px;top:553px;width:1px;height:27px;background:#e8e8e8;"></div>
<div class="a" style="left:583px;top:553px;width:1px;height:27px;background:#e8e8e8;"></div>
<div class="a" style="left:683px;top:553px;width:1px;height:27px;background:#e8e8e8;"></div>
<div class="a" style="left:763px;top:553px;width:1px;height:27px;background:#e8e8e8;"></div>
<div class="a" style="left:843px;top:553px;width:1px;height:27px;background:#e8e8e8;"></div>
<div class="a" style="left:923px;top:553px;width:1px;height:27px;background:#e8e8e8;"></div>
<div class="a" style="left:983px;top:553px;width:1px;height:27px;background:#e8e8e8;"></div>
<div class="a" style="left:1063px;top:553px;width:1px;height:27px;background:#e8e8e8;"></div>
<div class="a" style="left:1143px;top:553px;width:1px;height:27px;background:#e8e8e8;"></div>
<div class="a" style="left:1223px;top:553px;width:1px;height:27px;background:#e8e8e8;"></div>
<div class="a" style="left:1283px;top:553px;width:1px;height:27px;background:#e8e8e8;"></div>
<div class="a" style="left:1363px;top:553px;width:1px;height:27px;background:#e8e8e8;"></div>
<div class="a" style="left:1443px;top:553px;width:1px;height:27px;background:#e8e8e8;"></div>
<div class="a" style="left:1523px;top:553px;width:1px;height:27px;background:#e8e8e8;"></div>
<div class="a" style="left:303px;top:559.5px;width:13px;height:13px;border:1px solid #5a5a5a;box-shadow:0 0 0 0.4px rgba(90,90,90,.6);background:#fff"></div>
<div class="a" style="left:338px;top:556.9px;height:20px;line-height:20px;font-size:13.6px;color:#5a5a5a;font-weight:normal;">1909301187</div>
<div class="a" style="left:458px;top:556.9px;height:20px;line-height:20px;font-size:13.6px;color:#5a5a5a;font-weight:normal;">NB01</div>
<div class="a" style="left:518px;top:556.9px;height:20px;line-height:20px;font-size:13.6px;color:#5a5a5a;font-weight:normal;">0190177</div>
<div class="a" style="left:588px;top:556.9px;height:20px;line-height:20px;font-size:13.6px;color:#5a5a5a;font-weight:normal;">sy</div>
<div class="a" style="left:688px;top:556.9px;height:20px;line-height:20px;font-size:13.6px;color:#5a5a5a;font-weight:normal;">1000399.00</div>
<div class="a" style="left:768px;top:556.9px;height:20px;line-height:20px;font-size:13.6px;color:#5a5a5a;font-weight:normal;">6</div>
<div class="a" style="left:848px;top:556.9px;height:20px;line-height:20px;font-size:13.6px;color:#5a5a5a;font-weight:normal;">0.00</div>
<div class="a" style="left:928px;top:556.9px;height:20px;line-height:20px;font-size:13.6px;color:#5a5a5a;font-weight:normal;">1.0000</div>
<div class="a" style="left:988px;top:556.9px;height:20px;line-height:20px;font-size:13.6px;color:#5a5a5a;font-weight:normal;">250249.46</div>
<div class="a" style="left:1068px;top:556.9px;height:20px;line-height:20px;font-size:13.6px;color:#5a5a5a;font-weight:normal;">3.29</div>
<div class="a" style="left:1148px;top:556.5px;height:20px;line-height:20px;font-size:13px;color:#5a5a5a;font-weight:normal;">否</div>
<div class="a" style="left:1228px;top:556.5px;height:20px;line-height:20px;font-size:13px;color:#5a5a5a;font-weight:normal;">是</div>
<div class="a" style="left:1288px;top:556.5px;height:20px;line-height:20px;font-size:13px;color:#5a5a5a;font-weight:normal;">预付费模式</div>
<div class="a" style="left:1368px;top:556.5px;height:20px;line-height:20px;font-size:13px;color:#5a5a5a;font-weight:normal;">关阀</div>
<div class="a" style="left:1448px;top:556.5px;height:20px;line-height:20px;font-size:13px;color:#5a5a5a;font-weight:normal;">在线</div>
<div class="a" style="left:1528px;top:556.9px;height:20px;line-height:20px;font-size:13.6px;color:#5a5a5a;font-weight:normal;">02-13 15:01:41</div>
<div class="a" style="left:299px;top:580px;width:1351px;height:27px;background:#bababa;"></div>
<div class="a" style="left:299px;top:607px;width:1351px;height:1px;background:#e8e8e8;"></div>
<div class="a" style="left:333px;top:580px;width:1px;height:28px;background:#e8e8e8;"></div>
<div class="a" style="left:453px;top:580px;width:1px;height:28px;background:#e8e8e8;"></div>
<div class="a" style="left:513px;top:580px;width:1px;height:28px;background:#e8e8e8;"></div>
<div class="a" style="left:583px;top:580px;width:1px;height:28px;background:#e8e8e8;"></div>
<div class="a" style="left:683px;top:580px;width:1px;height:28px;background:#e8e8e8;"></div>
<div class="a" style="left:763px;top:580px;width:1px;height:28px;background:#e8e8e8;"></div>
<div class="a" style="left:843px;top:580px;width:1px;height:28px;background:#e8e8e8;"></div>
<div class="a" style="left:923px;top:580px;width:1px;height:28px;background:#e8e8e8;"></div>
<div class="a" style="left:983px;top:580px;width:1px;height:28px;background:#e8e8e8;"></div>
<div class="a" style="left:1063px;top:580px;width:1px;height:28px;background:#e8e8e8;"></div>
<div class="a" style="left:1143px;top:580px;width:1px;height:28px;background:#e8e8e8;"></div>
<div class="a" style="left:1223px;top:580px;width:1px;height:28px;background:#e8e8e8;"></div>
<div class="a" style="left:1283px;top:580px;width:1px;height:28px;background:#e8e8e8;"></div>
<div class="a" style="left:1363px;top:580px;width:1px;height:28px;background:#e8e8e8;"></div>
<div class="a" style="left:1443px;top:580px;width:1px;height:28px;background:#e8e8e8;"></div>
<div class="a" style="left:1523px;top:580px;width:1px;height:28px;background:#e8e8e8;"></div>
<div class="a" style="left:303px;top:587.0px;width:13px;height:13px;border:1px solid #5a5a5a;box-shadow:0 0 0 0.4px rgba(90,90,90,.6);background:#fff"></div>
<div class="a" style="left:338px;top:584.4px;height:20px;line-height:20px;font-size:13.6px;color:#5a5a5a;font-weight:normal;">1909301188</div>
<div class="a" style="left:458px;top:584.4px;height:20px;line-height:20px;font-size:13.6px;color:#5a5a5a;font-weight:normal;">NB02</div>
<div class="a" style="left:588px;top:584.0px;height:20px;line-height:20px;font-size:13px;color:#5a5a5a;font-weight:normal;">未开户</div>
<div class="a" style="left:988px;top:584.4px;height:20px;line-height:20px;font-size:13.6px;color:#5a5a5a;font-weight:normal;">0</div>
<div class="a" style="left:1068px;top:584.4px;height:20px;line-height:20px;font-size:13.6px;color:#5a5a5a;font-weight:normal;">2.91</div>
<div class="a" style="left:1148px;top:584.0px;height:20px;line-height:20px;font-size:13px;color:#5a5a5a;font-weight:normal;">否</div>
<div class="a" style="left:1228px;top:584.0px;height:20px;line-height:20px;font-size:13px;color:#5a5a5a;font-weight:normal;">否</div>
<div class="a" style="left:1288px;top:584.0px;height:20px;line-height:20px;font-size:13px;color:#5a5a5a;font-weight:normal;">强制模式</div>
<div class="a" style="left:1368px;top:584.0px;height:20px;line-height:20px;font-size:13px;color:#5a5a5a;font-weight:normal;">开阀</div>
<div class="a" style="left:1448px;top:584.0px;height:20px;line-height:20px;font-size:13px;color:#5a5a5a;font-weight:normal;">在线</div>
<div class="a" style="left:1528px;top:584.4px;height:20px;line-height:20px;font-size:13.6px;color:#5a5a5a;font-weight:normal;">02-13 15:00:59</div>
<div class="a" style="left:299px;top:608px;width:1351px;height:16px;background:#e8e8e8;"></div>
<div class="a" style="left:315px;top:608px;width:1199px;height:16px;background:#bababa;"></div>
<svg class="a" style="left:302px;top:610px" width="8" height="12" viewBox="0 0 8 12"><path d="M6 1.5 L2 6 L6 10.5" stroke="#8a8a8a" stroke-width="1.2" fill="none"/></svg>
<svg class="a" style="left:1637px;top:610px" width="8" height="12" viewBox="0 0 8 12"><path d="M2 1.5 L6 6 L2 10.5" stroke="#8a8a8a" stroke-width="1.2" fill="none"/></svg>
<div class="a" style="left:299px;top:624px;width:1351px;height:5px;background:#f4f5fa;"></div>
<div class="a" style="left:299px;top:629px;width:1351px;height:1px;background:#e6e6e6;"></div>
<div class="a" style="left:299px;top:630px;width:1351px;height:33px;background:#f4f5fa;"></div>
<svg class="a" style="left:312px;top:638px" width="14" height="13" viewBox="0 0 14 13"><path d="M7.5 1.8 H3.2 Q1.4 1.8 1.4 3.6 V10.1 Q1.4 11.9 3.2 11.9 H9.5 Q11.3 11.9 11.3 10.1 V6" stroke="#555" stroke-width="2.4" fill="none"/><path d="M7.2 6.8 L11.5 2.5" stroke="#555" stroke-width="2.4"/><path d="M8.2 0 H13.7 V5.5Z" fill="#555"/></svg>
<div class="a" style="left:327.5px;top:635.0px;height:20px;line-height:20px;font-size:14px;color:#555;font-weight:normal;">Columns</div>
<svg class="a" style="left:859px;top:640px" width="8" height="12" viewBox="0 0 8 12"><rect x="0" y="0" width="2.7" height="12" fill="#c2c2c8"/><path d="M7.9 0 L2.6 6 L7.9 12Z" fill="#c2c2c8"/></svg>
<svg class="a" style="left:887.8px;top:640px" width="12" height="12" viewBox="0 0 12 12"><path d="M6 0 L0 6 L6 12Z M12 0 L6 6 L12 12Z" fill="#c2c2c8"/></svg>
<div class="a" style="left:916px;top:636px;width:1px;height:18px;background:#dcdcdc;"></div>
<div class="a" style="left:935px;top:634px;width:39px;height:21px;background:#f7f8fb;border:2px solid #c6c6c6"></div>
<div class="a" style="left:943.5px;top:634.5px;height:20px;line-height:20px;font-size:13px;color:#666;font-weight:normal;">1</div>
<div class="a" style="left:978px;top:634.0px;height:20px;line-height:20px;font-size:13px;color:#555;font-weight:normal;">共 1 页</div>
<div class="a" style="left:1034px;top:636px;width:1px;height:18px;background:#dcdcdc;"></div>
<svg class="a" style="left:1050.5px;top:640px" width="12" height="12" viewBox="0 0 12 12"><path d="M0 0 L6 6 L0 12Z M6 0 L12 6 L6 12Z" fill="#c2c2c8"/></svg>
<svg class="a" style="left:1083px;top:640px" width="8" height="12" viewBox="0 0 8 12"><rect x="5.2" y="0" width="2.7" height="12" fill="#c2c2c8"/><path d="M0 0 L5.3 6 L0 12Z" fill="#c2c2c8"/></svg>
<div class="a" style="left:1559.5px;top:635.0px;height:20px;line-height:20px;font-size:13.5px;color:#555;font-weight:normal;">1 - 6</div>
<div class="a" style="left:1600px;top:635.0px;height:20px;line-height:20px;font-size:13.5px;color:#555;font-weight:normal;">共 6 条</div>
</body></html>
